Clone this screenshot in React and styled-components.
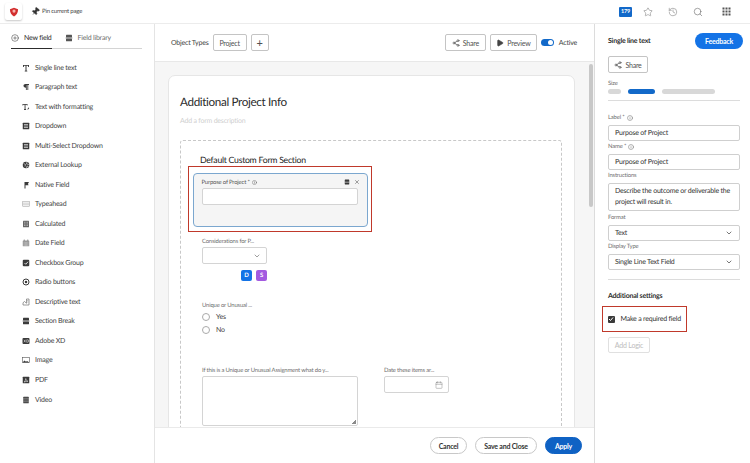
import React from 'react'
import styled, { createGlobalStyle } from 'styled-components'
import {
  Calendar, ChevronDown, CirclePlus, History, Info, Pin, Play, Search, Share2, Star, X,
} from 'lucide-react'

const GlobalStyle = createGlobalStyle`
  html, body { margin: 0; padding: 0; height: 100%; }
  body { font-family: Lato, "Open Sans", sans-serif; color: #2c2c2c; background: #fff; overflow: hidden; text-rendering: geometricPrecision; }
  #root { height: 100%; }
  * { box-sizing: border-box; letter-spacing: -0.03em; }
`

const Page = styled.div`
  width: 750px;
  height: 463px;
  display: flex;
  flex-direction: column;
  overflow: hidden;
`

const TopBar = styled.header`
  height: 24px;
  flex: none;
  display: flex;
  align-items: center;
  padding-left: 5px;
  border-bottom: 1px solid #ececec;
`

const LogoBox = styled.div`
  width: 17px;
  height: 17px;
  border-radius: 2px;
  background: #fff;
  box-shadow: 0 1px 2px rgba(0, 0, 0, 0.22);
  display: flex;
  align-items: center;
  justify-content: center;
`

const PinLink = styled.div`
  margin-left: 9px;
  display: flex;
  align-items: center;
  gap: 2px;
  font-size: 6px;
  color: #444;
`

const TopIcons = styled.div`
  margin-left: auto;
  display: flex;
  align-items: center;
  color: #6e6e6e;
  padding-right: 19px;
  gap: 15px;
`

const Badge = styled.div`
  width: 13px;
  height: 10px;
  margin-right: -4px;
  border-radius: 1px;
  background: #1269c9;
  color: #fff;
  font-size: 5.5px;
  font-weight: 700;
  display: flex;
  align-items: center;
  justify-content: center;
`

const Body = styled.div`
  flex: 1;
  min-height: 0;
  display: flex;
`

const Sidebar = styled.aside`
  width: 155px;
  flex: none;
  border-right: 1px solid #e4e4e4;
  padding: 10px 12px 0 11px;
`

const Tabs = styled.div`
  display: flex;
  height: 15px;
  gap: 13px;
  border-bottom: 1px solid #d4d4d4;
`

const Tab = styled.div`
  display: flex;
  align-items: flex-start;
  gap: 5px;
  height: 15px;
  padding-right: 0;
  font-size: 7px;
  line-height: 9px;
  color: ${p => (p.$active ? '#2c2c2c' : '#6e6e6e')};
  font-weight: 400;
  border-bottom: ${p => (p.$active ? '1px solid #2c2c2c' : 'none')};
`

const FieldList = styled.div`
  margin-top: 9px;
  padding-left: 11px;
  display: flex;
  flex-direction: column;
`

const FieldRow = styled.div`
  height: 19.53px;
  display: flex;
  align-items: center;
  gap: 5px;
  font-size: 7px;
  color: #444;
  white-space: nowrap;
`

const FieldGlyph = styled.svg`
  width: 8px;
  height: 8px;
  flex: none;
  color: #3a3a3a;
`

const Center = styled.main`
  width: 440px;
  flex: none;
  display: flex;
  flex-direction: column;
  border-right: 1px solid #dcdcdc;
`

const Toolbar = styled.div`
  height: 38px;
  flex: none;
  display: flex;
  align-items: center;
  padding: 0 17px 0 16px;
  border-bottom: 1px solid #e8e8e8;
  font-size: 7px;
  color: #444;
`

const ToolLabel = styled.span`
  margin-right: 4px;
`

const OutlineButton = styled.button`
  height: 17px;
  width: ${p => p.$width}px;
  margin-right: ${p => p.$gap || 0}px;
  margin-left: ${p => (p.$push ? 'auto' : '0')};
  padding: 0;
  border: 1px solid #c4c4c4;
  border-radius: 2px;
  background: #fff;
  color: #505050;
  font: inherit;
  font-size: 7px;
  display: flex;
  align-items: center;
  justify-content: center;
  gap: 3px;
`

const ToggleTrack = styled.div`
  width: 13px;
  height: 7px;
  border-radius: 4px;
  background: #1269c9;
  margin-right: 5px;
  display: flex;
  justify-content: flex-end;
  align-items: center;
  padding-right: 1px;
`

const ToggleKnob = styled.div`
  width: 5px;
  height: 5px;
  border-radius: 50%;
  background: #fff;
`

const ScrollArea = styled.div`
  position: relative;
  flex: 1;
  min-height: 0;
  background: #f6f6f6;
  padding: 13px 0 0 13px;
  overflow: hidden;
`

const ScrollThumb = styled.div`
  position: absolute;
  top: 2px;
  right: 1px;
  width: 4px;
  height: 143px;
  border-radius: 2px;
  background: #c8c8c8;
`

const Card = styled.section`
  width: 407px;
  height: 420px;
  background: #fff;
  border: 1px solid #e6e6e6;
  border-radius: 7px 7px 0 0;
  padding: 17px 11px 0;
`

const FormTitle = styled.h1`
  margin: 0;
  font-size: 11.7px;
  line-height: 18px;
  font-weight: 400;
  color: #2c2c2c;
`

const FormHint = styled.p`
  margin: 5px 0 0;
  font-size: 7px;
  line-height: 10px;
  color: #cfcfcf;
`

const Section = styled.div`
  margin-top: 14px;
  width: 382px;
  height: 300px;
  border: 1px dashed #c8c8c8;
  border-bottom: none;
  border-radius: 3px 3px 0 0;
  padding: 12px 0 0 7px;
`

const SectionTitle = styled.h2`
  margin: 0 0 -1px 12px;
  font-size: 8.7px;
  line-height: 14px;
  font-weight: 400;
  color: #222;
`

const Highlight = styled.div`
  border: 1.5px solid #c0392b;
  width: ${p => p.$width}px;
  height: ${p => p.$height}px;
  padding: ${p => p.$pad};
`

const SelectedField = styled.div`
  position: relative;
  height: 100%;
  background: #f5f5f5;
  border: 1px solid #7ba7cf;
  border-radius: 4px;
  padding: 5px 8px;
`

const FieldActions = styled.div`
  position: absolute;
  top: 5px;
  right: 7px;
  display: flex;
  align-items: center;
  gap: 4px;
  color: #444;
`

const FieldLabel = styled.div`
  font-size: 5.9px;
  line-height: 8px;
  color: ${p => (p.$dark ? '#555' : '#6e6e6e')};
  display: flex;
  align-items: center;
  gap: 2px;
  white-space: nowrap;
`

const TextBox = styled.div`
  width: ${p => p.$width}px;
  height: ${p => p.$height || 17}px;
  margin-top: 1px;
  padding: 0 5px;
  background: #fff;
  border: 1px solid #d4d4d4;
  border-radius: 2px;
  color: #6e6e6e;
  display: flex;
  align-items: center;
  justify-content: flex-end;
`

const FormColumn = styled.div`
  padding-left: 14px;
  margin-top: ${p => p.$top || 0}px;
`

const ChipRow = styled.div`
  width: 65px;
  margin-top: 6px;
  display: flex;
  justify-content: flex-end;
  gap: 4px;
`

const Chip = styled.div`
  width: 11px;
  height: 11px;
  border-radius: 2px;
  background: ${p => p.$color};
  color: #fff;
  font-size: 6px;
  font-weight: 700;
  display: flex;
  align-items: center;
  justify-content: center;
`

const RadioRow = styled.div`
  height: 13px;
  display: flex;
  align-items: center;
  gap: 6px;
  font-size: 7px;
  color: #444;
`

const RadioDot = styled.span`
  width: 8px;
  height: 8px;
  border: 1px solid #aaa;
  border-radius: 50%;
`

const SplitRow = styled.div`
  display: flex;
  gap: 26px;
  padding-left: 14px;
  margin-top: 31px;
`

const Resizer = styled.div`
  position: absolute;
  right: 1px;
  bottom: 1px;
  width: 4px;
  height: 4px;
  background: linear-gradient(135deg, transparent 50%, #8a8a8a 50%);
`

const TextAreaBox = styled(TextBox)`
  position: relative;
`

const Footer = styled.footer`
  height: 36px;
  flex: none;
  background: #fff;
  border-top: 1px solid #eaeaea;
  display: flex;
  align-items: center;
  justify-content: flex-end;
  gap: 8px;
  padding-right: 12px;
`

const PillButton = styled.button`
  height: 17px;
  width: ${p => p.$width}px;
  padding: 0;
  border-radius: 9px;
  border: 1px solid ${p => (p.$primary ? '#0f62c4' : '#c8c8c8')};
  background: ${p => (p.$primary ? '#0f62c4' : '#fff')};
  color: ${p => (p.$primary ? '#fff' : '#333')};
  font: inherit;
  font-size: 7px;
  font-weight: 700;
`

const Panel = styled.aside`
  width: 155px;
  flex: none;
  padding: 9px 10px 0 13px;
`

const PanelHead = styled.div`
  display: flex;
  align-items: center;
  justify-content: space-between;
  height: 16px;
  margin-right: -3px;
  font-size: 7px;
  font-weight: 700;
`

const FeedbackButton = styled.button`
  width: 48px;
  height: 16px;
  padding: 0;
  border: none;
  border-radius: 8px;
  background: #1473e6;
  color: #fff;
  font: inherit;
  font-size: 7px;
  font-weight: 700;
`

const PanelShare = styled(OutlineButton)`
  margin-top: 7px;
`

const SizeLabel = styled.div`
  margin-top: 7px;
  font-size: 5.9px;
  line-height: 8px;
  color: #6e6e6e;
`

const SizeBars = styled.div`
  margin-top: 1px;
  display: flex;
  gap: 7px;
`

const SizeBar = styled.div`
  width: ${p => p.$width}px;
  height: 5px;
  border-radius: 3px;
  background: ${p => (p.$active ? '#1269c9' : '#d8d8d8')};
`

const Divider = styled.hr`
  margin: ${p => p.$margin};
  border: none;
  border-top: 1px solid #dcdcdc;
`

const PanelField = styled.div`
  display: flex;
  flex-direction: column;
  margin-top: ${p => p.$top || 0}px;
`

const PanelLabel = styled.div`
  height: 8px;
  font-size: 5.9px;
  line-height: 8px;
  color: #6e6e6e;
  display: flex;
  align-items: center;
  gap: 2px;
`

const PanelInput = styled.div`
  min-height: ${p => p.$height || 16}px;
  margin-top: 3px;
  padding: ${p => (p.$multi ? '2px 3px 2px 6px' : '0 6px')};
  border: 1px solid #cfcfcf;
  border-radius: 2px;
  background: #fff;
  font-size: 7px;
  line-height: 11px;
  color: #333;
  display: ${p => (p.$multi ? 'block' : 'flex')};
  align-items: center;
  justify-content: space-between;
`

const SettingsTitle = styled.h3`
  margin: 11px 0 0;
  font-size: 7px;
  line-height: 10px;
  font-weight: 700;
  color: #2c2c2c;
`

const RequiredBox = styled(Highlight)`
  margin: 5px 0 0 -6px;
  display: flex;
  align-items: center;
  gap: 6px;
  font-size: 7px;
  color: #333;
  white-space: nowrap;
`

const CheckBox = styled.span`
  width: 7px;
  height: 7px;
  flex: none;
  border-radius: 1px;
  background: #3a3a3a;
  display: flex;
  align-items: center;
  justify-content: center;
`

const DisabledButton = styled.button`
  display: block;
  width: 42px;
  height: 16px;
  margin-top: 5px;
  padding: 0;
  border: 1px solid #e0e0e0;
  border-radius: 2px;
  background: #fff;
  color: #bdbdbd;
  font: inherit;
  font-size: 7px;
`

// small filled glyphs for the field palette, drawn on a 16 unit grid
const glyphs = {
  text: <path d="M2 2h12v4h-1.500l-.7-2.400H9v9.200l1.500.7V15h-5v-1.500l1.500-.7V3.600H4.200L3.500 6H2z" fill="currentColor" />,
  para: <path d="M7 2h7v1.800h-1.500V14h-1.700V3.800H9.500V14H7.800V9.500C4.500 9.500 3 7.800 3 5.700S4.500 2 7 2z" fill="currentColor" />,
  rich: <><path d="M1 2h10v3h-1.200l-.5-1.500H7V12l1.200.5V14H4v-1.500L5.200 12V3.500H2.700L2.200 5H1z" fill="currentColor" /><path d="M10 13c2-.2 1-3 3-4l1.500 1c-1 2-2 3.700-4.500 3z" fill="currentColor" /></>,
  list: <><rect x="1.500" y="1.500" width="13" height="13" rx="1" fill="currentColor" /><path d="M4 5h8M4 8h8M4 11h8" stroke="#fff" strokeWidth="1.200" /></>,
  globe: <><circle cx="8" cy="8" r="6.500" fill="currentColor" /><path d="M3 5l4 2-1 4M10 2l-1 4 5 1M9 14l1-4 3 1" stroke="#fff" strokeWidth="1.100" fill="none" /></>,
  flag: <path d="M5 2h9l-2 3.500 1 3H7V15H5z" fill="currentColor" />,
  lines: <><rect x="1.500" y="3" width="13" height="10" fill="none" stroke="#999" /><path d="M1.500 6.300h13M1.500 9.600h13" stroke="#999" /></>,
  calc: <><rect x="2" y="1.500" width="12" height="13" rx="1" fill="#666" /><path d="M4 4.500h8M4 8h8M4 11h8" stroke="#ddd" strokeWidth="1.200" strokeDasharray="2 1" /></>,
  date: <><rect x="1.500" y="3" width="13" height="11.500" rx="1" fill="#999" /><path d="M4.500 1v3M11.500 1v3" stroke="#777" strokeWidth="1.500" /><path d="M3.500 7.500h9M3.500 10h9M3.500 12.500h9" stroke="#eee" strokeDasharray="1.500 1" /></>,
  check: <><rect x="1.500" y="1.500" width="13" height="13" rx="2" fill="currentColor" /><path d="M5 8l2.500 2.500L12 5.500" stroke="#fff" strokeWidth="1.600" fill="none" /></>,
  radio: <><circle cx="8" cy="8" r="6" fill="none" stroke="currentColor" strokeWidth="2" /><circle cx="8" cy="8" r="2.500" fill="currentColor" /></>,
  desc: <><path d="M9 2h5v12H2V9.500L5 7l4 3.500z" fill="none" stroke="#666" strokeWidth="1.300" /><path d="M10.500 5h2M10.500 8h2" stroke="#666" /></>,
  section: <><rect x="2" y="1.500" width="12" height="5.500" rx="1" fill="currentColor" /><rect x="2" y="9" width="12" height="5.500" rx="1" fill="currentColor" /><path d="M1 8h14" stroke="currentColor" /></>,
  xd: <><rect x="1" y="2" width="14" height="12" rx="2" fill="currentColor" /><path d="M4 5.500l3 5M7 5.500l-3 5M9.500 5.500v5h1.500a2.500 2.500 0 0 0 0-5z" stroke="#fff" fill="none" /></>,
  image: <><rect x="1" y="3" width="14" height="10" fill="none" stroke="#555" strokeWidth="1.200" /><path d="M1 13l4-4 3 2.500 2-1.500 5 3z" fill="currentColor" /></>,
  pdf: <><rect x="1.500" y="1.500" width="13" height="13" rx="1" fill="currentColor" /><path d="M4 12c2-1 3-3.500 3.500-7 .5 3 2 5 4.500 5.500-3 0-5 .5-8 1.500z" stroke="#fff" fill="none" /></>,
  video: <><rect x="2.500" y="1.500" width="11" height="13" rx="1" fill="currentColor" /><path d="M2.500 4.500h11M2.500 8h11M2.500 11.500h11" stroke="#ccc" /></>,
}

const fields = [
  ['text', 'Single line text'],
  ['para', 'Paragraph text'],
  ['rich', 'Text with formatting'],
  ['list', 'Dropdown'],
  ['list', 'Multi-Select Dropdown'],
  ['globe', 'External Lookup'],
  ['flag', 'Native Field'],
  ['lines', 'Typeahead'],
  ['calc', 'Calculated'],
  ['date', 'Date Field'],
  ['check', 'Checkbox Group'],
  ['radio', 'Radio buttons'],
  ['desc', 'Descriptive text'],
  ['section', 'Section Break'],
  ['xd', 'Adobe XD'],
  ['image', 'Image'],
  ['pdf', 'PDF'],
  ['video', 'Video'],
]

function App() {
  return (
    <Page>
      <GlobalStyle />
      <TopBar>
        <LogoBox>
          <svg width="10" height="10" viewBox="0 0 16 16">
            <path d="M8 1l6.500 2.500C14.500 9 12 13 8 15 4 13 1.500 9 1.500 3.500z" fill="#d32f2f" />
            <circle cx="8" cy="6.500" r="2.500" fill="#f6b5b0" />
          </svg>
        </LogoBox>
        <PinLink>
          <Pin size={9} fill="#333" strokeWidth={1.500} style={{ transform: 'rotate(40deg)' }} />
          Pin current page
        </PinLink>
        <TopIcons>
          <Badge>179</Badge>
          <Star size={10} strokeWidth={1.200} />
          <History size={10} strokeWidth={1.200} />
          <Search size={10} strokeWidth={1.500} />
          <svg width="9" height="9" viewBox="0 0 9 9" fill="#555" style={{ marginLeft: 4 }}>
            {[0.500, 3.500, 6.500].map(y => [0.500, 3.500, 6.500].map(x => <rect key={`${x}${y}`} x={x} y={y} width="2" height="2" />))}
          </svg>
        </TopIcons>
      </TopBar>
      <Body>
        <Sidebar>
          <Tabs>
            <Tab $active>
              <CirclePlus size={8} strokeWidth={1.500} />
              New field
            </Tab>
            <Tab>
              <FieldGlyph viewBox="0 0 16 16" style={{ color: '#555' }}>{glyphs.section}</FieldGlyph>
              Field library
            </Tab>
          </Tabs>
          <FieldList>
            {fields.map(([icon, name]) => (
              <FieldRow key={name}>
                <FieldGlyph viewBox="0 0 16 16">{glyphs[icon]}</FieldGlyph>
                {name}
              </FieldRow>
            ))}
          </FieldList>
        </Sidebar>
        <Center>
          <Toolbar>
            <ToolLabel>Object Types</ToolLabel>
            <OutlineButton $width={34} $gap={4}>Project</OutlineButton>
            <OutlineButton $width={18}><span style={{ fontSize: 11 }}>+</span></OutlineButton>
            <OutlineButton $width={41} $gap={4} $push><Share2 size={8} />Share</OutlineButton>
            <OutlineButton $width={47} $gap={4}><Play size={8} fill="#444" />Preview</OutlineButton>
            <ToggleTrack><ToggleKnob /></ToggleTrack>
            <span>Active</span>
          </Toolbar>
          <ScrollArea>
            <ScrollThumb />
            <Card>
              <FormTitle>Additional Project Info</FormTitle>
              <FormHint>Add a form description</FormHint>
              <Section>
                <SectionTitle>Default Custom Form Section</SectionTitle>
                <Highlight $width={184} $height={66} $pad="5.500px 3.500px 4.500px">
                  <SelectedField>
                    <FieldActions>
                      <FieldGlyph viewBox="0 0 16 16" style={{ width: 6, height: 6 }}>{glyphs.section}</FieldGlyph>
                      <X size={6} strokeWidth={2} />
                    </FieldActions>
                    <FieldLabel $dark>Purpose of Project * <Info size={5} /></FieldLabel>
                    <TextBox $width={156} />
                  </SelectedField>
                </Highlight>
                <FormColumn $top={6}>
                  <FieldLabel>Considerations for P...</FieldLabel>
                  <TextBox $width={65}><ChevronDown size={8} /></TextBox>
                  <ChipRow>
                    <Chip $color="#1473e6">D</Chip>
                    <Chip $color="#a35ae0">S</Chip>
                  </ChipRow>
                </FormColumn>
                <FormColumn $top={21}>
                  <FieldLabel>Unique or Unusual ...</FieldLabel>
                  <RadioRow><RadioDot />Yes</RadioRow>
                  <RadioRow><RadioDot />No</RadioRow>
                </FormColumn>
                <SplitRow>
                  <div>
                    <FieldLabel>If this is a Unique or Unusual Assignment what do y...</FieldLabel>
                    <TextAreaBox $width={156} $height={50}><Resizer /></TextAreaBox>
                  </div>
                  <div>
                    <FieldLabel>Date these items ar...</FieldLabel>
                    <TextBox $width={65}><Calendar size={8} strokeWidth={1.200} /></TextBox>
                  </div>
                </SplitRow>
              </Section>
            </Card>
          </ScrollArea>
          <Footer>
            <PillButton $width={37}>Cancel</PillButton>
            <PillButton $width={62}>Save and Close</PillButton>
            <PillButton $width={37} $primary>Apply</PillButton>
          </Footer>
        </Center>
        <Panel>
          <PanelHead>
            Single line text
            <FeedbackButton>Feedback</FeedbackButton>
          </PanelHead>
          <PanelShare $width={40}><Share2 size={8} />Share</PanelShare>
          <SizeLabel>Size</SizeLabel>
          <SizeBars>
            <SizeBar $width={13} />
            <SizeBar $width={27} $active />
            <SizeBar $width={53} />
          </SizeBars>
          <Divider $margin="6px 0 0" />
          <PanelField $top={13}>
            <PanelLabel>Label * <Info size={6} /></PanelLabel>
            <PanelInput>Purpose of Project</PanelInput>
          </PanelField>
          <PanelField $top={2}>
            <PanelLabel>Name * <Info size={6} /></PanelLabel>
            <PanelInput>Purpose of Project</PanelInput>
          </PanelField>
          <PanelField $top={2}>
            <PanelLabel>Instructions</PanelLabel>
            <PanelInput $multi $height={28}>Describe the outcome or deliverable the project will result in.</PanelInput>
          </PanelField>
          <PanelField $top={3}>
            <PanelLabel>Format</PanelLabel>
            <PanelInput>Text<ChevronDown size={8} /></PanelInput>
          </PanelField>
          <PanelField $top={2}>
            <PanelLabel>Display Type</PanelLabel>
            <PanelInput>Single Line Text Field<ChevronDown size={8} /></PanelInput>
          </PanelField>
          <Divider $margin="9px 0 0" />
          <SettingsTitle>Additional settings</SettingsTitle>
          <RequiredBox $width={85} $height={26} $pad="0 0 0 4.500px">
            <CheckBox>
              <svg width="6" height="6" viewBox="0 0 6 6"><path d="M1 3l1.500 1.500L5 1.500" stroke="#fff" fill="none" /></svg>
            </CheckBox>
            Make a required field
          </RequiredBox>
          <DisabledButton>Add Logic</DisabledButton>
        </Panel>
      </Body>
    </Page>
  )
}

export default App
